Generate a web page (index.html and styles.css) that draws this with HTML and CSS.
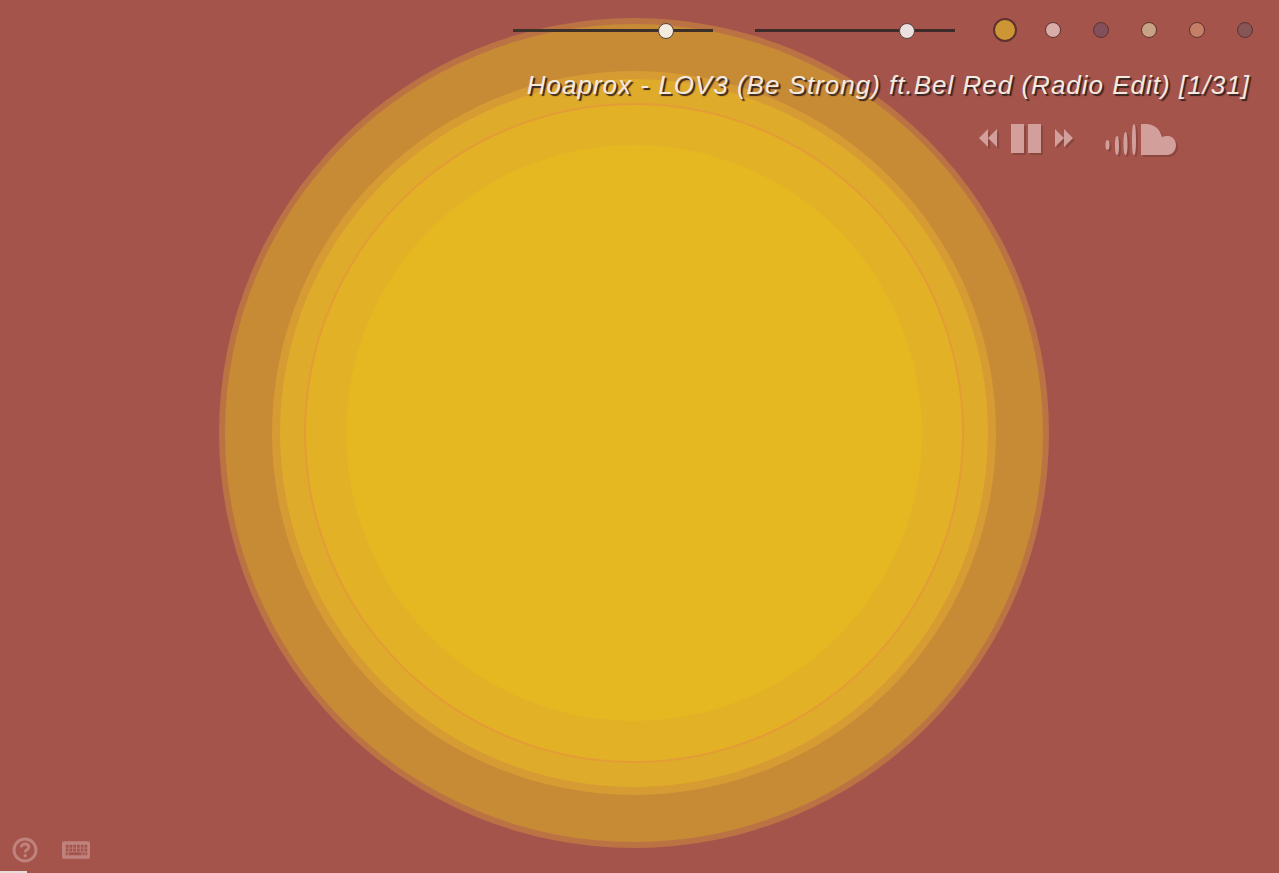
FILE: index.html
```html
<!DOCTYPE html>
<html lang="en">
<head>
    <meta charset="UTF-8">
    <meta name="viewport" content="width=device-width, initial-scale=1.0">
    <title>Visualizer</title>
    <link rel="stylesheet" href="styles.css">
</head>
<body>
  <!-- concentric bass circles -->
  <div class="visualizer">
    <div class="circle c1"><div class="circle c2"><div class="circle c3"><div class="circle c4"><div class="circle c5"><div class="circle c6"><div class="circle c7"></div></div></div></div></div></div></div>
  </div>

  <div class="top-panel">
    <div class="settings-row">
      <div class="slider slider-a"><span class="thumb thumb-a"></span></div>
      <div class="slider slider-b"><span class="thumb thumb-b"></span></div>
      <div class="swatches">
        <span class="swatch big s1"></span>
        <span class="swatch s2"></span>
        <span class="swatch s3"></span>
        <span class="swatch s4"></span>
        <span class="swatch s5"></span>
        <span class="swatch s6"></span>
      </div>
    </div>
    <div class="track-title">Hoaprox - LOV3 (Be Strong) ft.Bel Red (Radio Edit) [1/31]</div>
    <div class="player-row">
      <svg class="icon seek" width="18" height="20" viewBox="0 0 18 20"><path d="M9 1V19L0 10ZM18 1V19L9 10Z"/></svg>
      <svg class="icon pause" width="30" height="29" viewBox="0 0 30 29"><path d="M0 0H13V29H0ZM17 0H30V29H17Z"/></svg>
      <svg class="icon seek" width="18" height="20" viewBox="0 0 18 20"><path d="M0 1V19L9 10ZM9 1V19L18 10Z"/></svg>
      <svg class="icon soundcloud" width="71" height="33" viewBox="0 0 71 33"><path d="M2.500 17C4 17 4.500 19.500 4.500 22S4 27 2.500 27S.5 24.500 .5 22S1 17 2.500 17ZM12 13C13.500 13 14 17 14 22.500S13.500 32 12 32S10 28 10 22.500S10.500 13 12 13ZM20.500 9C22 9 22.500 15 22.500 21S22 32 20.500 32S18.500 27 18.500 21S19 9 20.500 9ZM29 1C30.500 1 31 8 31 17S30.500 32 29 32S27 26 27 17S27.500 1 29 1ZM36 1H41C49 1 55 6 57 14C59 13 61 13 63 13C67.500 13 71 17 71 22C71 28 67 32 62 32H36Z"/></svg>
    </div>
  </div>

  <div class="help-row">
    <svg class="icon" width="26" height="26" viewBox="0 0 26 26"><circle class="ring" cx="13" cy="13" r="11"/><path class="ring q" d="M9.200 10.500C9.200 8.300 11 7 13 7C15.200 7 16.800 8.300 16.800 10.200C16.800 12.800 13.200 12.700 13.200 15.500"/><circle cx="13.200" cy="18.800" r="1.700"/></svg>
    <svg class="icon keyboard" width="28" height="18" viewBox="0 0 30 19"><path fill-rule="evenodd" d="M2 0H28A2 2 0 0 1 30 2V17A2 2 0 0 1 28 19H2A2 2 0 0 1 0 17V2A2 2 0 0 1 2 0ZM4 4V7H7V4ZM8 4V7H11V4ZM12 4V7H15V4ZM16 4V7H19V4ZM20 4V7H23V4ZM24 4V7H27V4ZM4 8V11H7V8ZM8 8V11H11V8ZM12 8V11H15V8ZM16 8V11H19V8ZM20 8V11H23V8ZM24 8V11H27V8ZM4 12V15H6V12ZM7 12V15H21V12ZM22 12V15H24V12ZM25 12V15H27V12Z"/></svg>
  </div>
  <div class="progress"></div>
</body>
</html>
```

FILE: styles.css
```css
html, body {
  margin: 0;
  padding: 0;
  height: 100%;
  overflow: hidden;
}
body {
  background-color: #a5544c;
  font-family: "Liberation Sans", Arial, sans-serif;
}

/* circles are centered inside each other */
.visualizer {
  position: absolute;
  left: 219px;
  top: 18px;
}
.circle {
  display: flex;
  align-items: center;
  justify-content: center;
  border-radius: 50%;
}
.c1 { width: 830px; height: 830px; background-color: #bb7344; }
.c2 { width: 818px; height: 818px; background-color: #c78a35; }
.c3 { width: 724px; height: 724px; background-color: #d69b33; }
.c4 { width: 708px; height: 708px; background-color: #dfab2b; }
.c5 { width: 660px; height: 660px; background-color: #e39c36; }
.c6 { width: 656px; height: 656px; background-color: #e2b126; }
.c7 { width: 576px; height: 576px; background-color: #e5b821; }

.top-panel {
  position: absolute;
  top: 0;
  right: 0;
  display: flex;
  flex-direction: column;
  align-items: flex-end;
}
.settings-row {
  display: flex;
  align-items: center;
  height: 60px;
  padding-right: 26px;
}
.slider {
  position: relative;
  width: 200px;
  height: 3px;
  background-color: #3c3029;
  margin-right: 42px;
}
.thumb {
  position: absolute;
  top: -6px;
  width: 16px;
  height: 16px;
  border: 1px solid #55423a;
  box-sizing: border-box;
  border-radius: 50%;
}
.slider-b { background-color: #3f2a2a; margin-right: 38px; }
.thumb-a { left: 145px; background-color: #f3ebdd; }
.thumb-b { left: 144px; background-color: #ecdfdf; }

.swatches {
  display: flex;
  align-items: center;
  gap: 32px;
}
.swatch {
  width: 16px;
  height: 16px;
  box-sizing: border-box;
  border: 1px solid #5e3230;
  border-radius: 50%;
}
.swatch.big {
  width: 24px;
  height: 24px;
  border-width: 2px;
  margin-right: -4px;
}
.s1 { background-color: #cd9634; }
.s2 { background-color: #d8aca8; }
.s3 { background-color: #82505a; }
.s4 { background-color: #c8a284; }
.s5 { background-color: #c67f66; }
.s6 { background-color: #855655; }

.track-title {
  margin-top: 10px;
  padding-right: 29px;
  font-size: 26px;
  line-height: 30px;
  font-style: italic;
  letter-spacing: 1px;
  color: #f2e9e1;
  text-shadow: 2px 2px 1px #3a2420;
  white-space: nowrap;
}

.player-row {
  display: flex;
  align-items: center;
  margin-top: 23px;
  padding-right: 103px;
}
.icon {
  display: block;
  fill: #d29f9b;
  filter: drop-shadow(2px 2px 0 #8c4640);
}
.seek { margin-bottom: 4px; }
.pause { margin: 0 14px 3px; }
.soundcloud { margin-left: 32px; }

.help-row {
  position: absolute;
  left: 12px;
  bottom: 10px;
  display: flex;
  align-items: center;
  gap: 24px;
}
.help-row .icon {
  fill: #bf827c;
  filter: none;
}
.ring {
  fill: none;
  stroke: #bf827c;
  stroke-width: 3;
}
.help-row .ring { fill: none; }
.q { stroke-width: 2.8; }

.progress {
  position: absolute;
  left: 0;
  bottom: 0;
  width: 27px;
  height: 2px;
  background-color: #e8dcd8;
}
```
